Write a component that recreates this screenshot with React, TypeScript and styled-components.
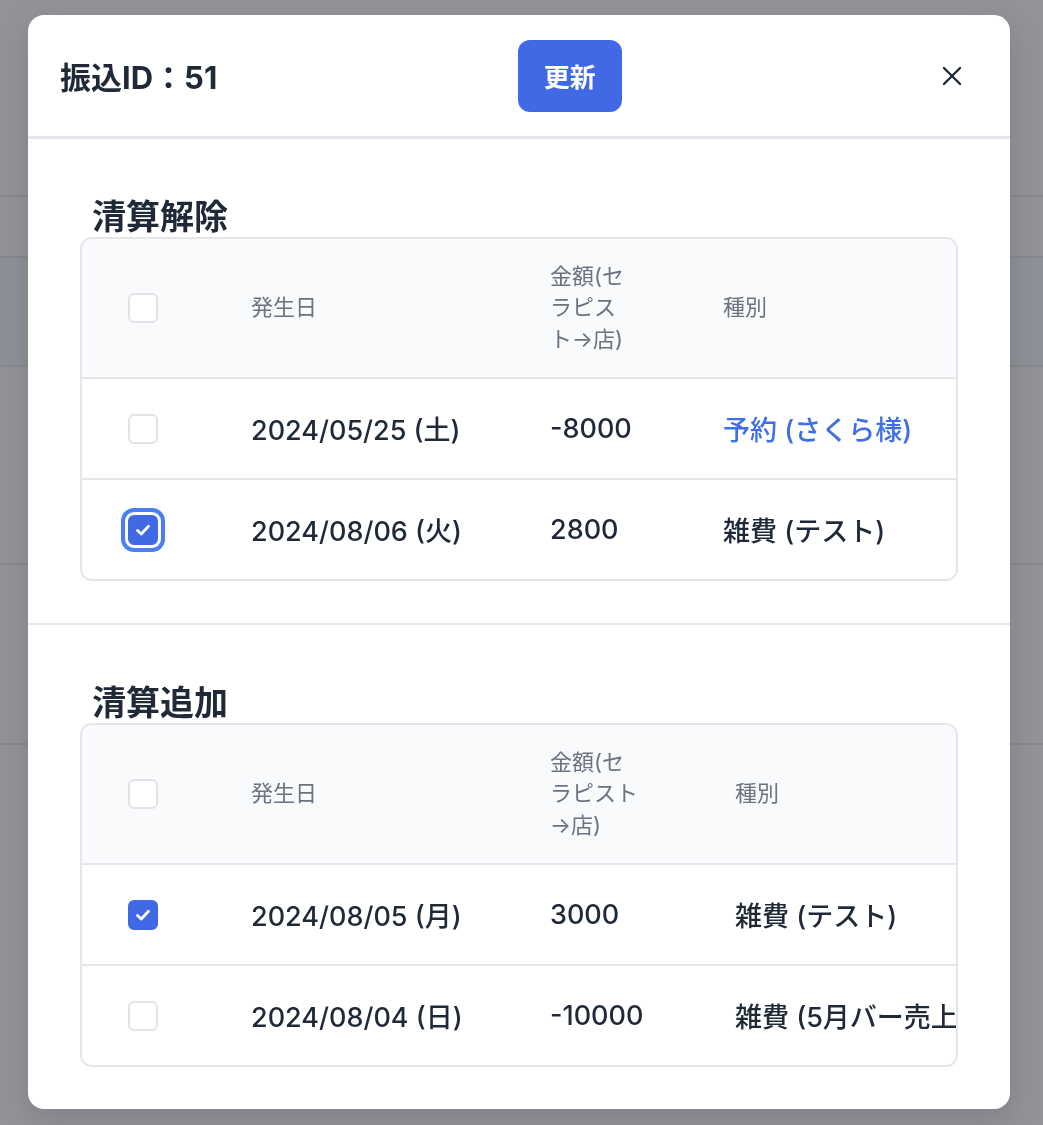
import React from 'react';
import styled, { createGlobalStyle } from 'styled-components';

const GlobalStyle = createGlobalStyle`
  html, body {
    margin: 0;
    padding: 0;
  }
  body {
    background: #919399;
    font-family: Inter, "Noto Sans CJK JP", sans-serif;
    color: #1f2937;
    -webkit-font-smoothing: antialiased;
  }
  * {
    box-sizing: border-box;
  }
`;

// dimmed page behind the modal
const Page = styled.div`
  height: 1125px;
  overflow: hidden;
  display: flex;
  flex-direction: column;
`;

const PageRow = styled.div<{ $h: number; $shade?: boolean }>`
  flex: 0 0 ${(p) => p.$h}px;
  border-bottom: 2px solid #86888e;
  background: ${(p) => (p.$shade ? '#8e9098' : 'transparent')};
`;

const Overlay = styled.div`
  position: fixed;
  inset: 0;
  padding: 15px 33px 0 28px;
`;

const Modal = styled.div`
  width: 982px;
  background: #fff;
  border-radius: 16px;
  overflow: hidden;
  box-shadow: 0 10px 30px rgba(0, 0, 0, 0.12);
`;

const Header = styled.header`
  height: 124px;
  display: flex;
  align-items: center;
  justify-content: space-between;
  padding: 0 28px 0 32px;
  border-bottom: 3px solid #e5e6eb;
`;

const Title = styled.h2`
  margin: 0;
  font-size: 31px;
  font-weight: 700;
  color: #1f2937;
`;

const UpdateButton = styled.button`
  width: 104px;
  height: 72px;
  border: none;
  border-radius: 12px;
  background: #4169e6;
  color: #fff;
  font-family: inherit;
  font-size: 26px;
  font-weight: 700;
  cursor: pointer;
`;

const CloseButton = styled.button`
  width: 60px;
  height: 60px;
  border: none;
  background: transparent;
  display: flex;
  align-items: center;
  justify-content: center;
  padding: 0;
  cursor: pointer;
`;

const Section = styled.section`
  padding: 58px 52px 42px;

  & + & {
    border-top: 2px solid #e5e6eb;
  }
`;

const SectionTitle = styled.h3`
  margin: 0 0 0 12px;
  font-size: 34px;
  line-height: 40px;
  font-weight: 700;
  color: #1f2937;
`;

const Card = styled.div`
  border: 2px solid #e5e6eb;
  border-radius: 12px;
  overflow: hidden;
`;

const Row = styled.div<{ $cols: string; $head?: boolean }>`
  display: grid;
  grid-template-columns: ${(p) => p.$cols};
  align-items: center;
  min-height: ${(p) => (p.$head ? 140 : 101)}px;
  background: ${(p) => (p.$head ? '#f9fafb' : '#fff')};
  border-bottom: 2px solid #e5e6eb;

  &:last-child {
    min-height: 99px;
    border-bottom: none;
  }
`;

const CheckCell = styled.div`
  padding-left: 46px;
  display: flex;
  align-items: center;
`;

const HeadCell = styled.div<{ $wrap?: number }>`
  padding-left: 24px;
  font-size: 22px;
  line-height: 31.5px;
  color: #6b7280;

  span {
    display: block;
    max-width: ${(p) => (p.$wrap ? `${p.$wrap}px` : 'none')};
  }
`;

const Cell = styled.div`
  padding-left: 24px;
  font-size: 27px;
  font-weight: 500;
  white-space: nowrap;
  color: #1f2937;
`;

const Link = styled.a`
  color: #3f6fe6;
  text-decoration: none;
`;

const Box = styled.span<{ $checked?: boolean; $focused?: boolean }>`
  width: 30px;
  height: 30px;
  border-radius: 6px;
  border: 2px solid ${(p) => (p.$checked ? '#4169e6' : '#e2e3e8')};
  background: ${(p) => (p.$checked ? '#4169e6' : '#fff')};
  display: inline-flex;
  align-items: center;
  justify-content: center;
  box-shadow: ${(p) => (p.$focused ? '0 0 0 3px #fff, 0 0 0 7px #4a7ff2' : 'none')};
`;

function Checkbox({ checked, focused }: { checked?: boolean; focused?: boolean }) {
  return (
    <Box $checked={checked} $focused={focused}>
      {checked && (
        <svg width="20" height="20" viewBox="0 0 16 16" fill="none">
          <polyline
            points="3.6 8.4 6.6 11.2 12.4 5"
            stroke="#fff"
            strokeWidth="2.2"
            strokeLinecap="round"
            strokeLinejoin="round"
          />
        </svg>
      )}
    </Box>
  );
}

type Entry = {
  date: string;
  amount: string;
  kind: string;
  link?: boolean;
  checked?: boolean;
  focused?: boolean;
};

type TableProps = {
  title: string;
  cols: string;
  amountWrap: number;
  rows: Entry[];
};

function SettleTable({ title, cols, amountWrap, rows }: TableProps) {
  return (
    <Section>
      <SectionTitle>{title}</SectionTitle>
      <Card>
        <Row $cols={cols} $head>
          <CheckCell>
            <Checkbox />
          </CheckCell>
          <HeadCell>発生日</HeadCell>
          <HeadCell $wrap={amountWrap}>
            <span>金額(セラピスト→店)</span>
          </HeadCell>
          <HeadCell>種別</HeadCell>
        </Row>
        {rows.map((r) => (
          <Row $cols={cols} key={r.date}>
            <CheckCell>
              <Checkbox checked={r.checked} focused={r.focused} />
            </CheckCell>
            <Cell>{r.date}</Cell>
            <Cell>{r.amount}</Cell>
            <Cell>{r.link ? <Link href="#">{r.kind}</Link> : r.kind}</Cell>
          </Row>
        ))}
      </Card>
    </Section>
  );
}

const removeRows: Entry[] = [
  { date: '2024/05/25 (土)', amount: '-8000', kind: '予約 (さくら様)', link: true },
  { date: '2024/08/06 (火)', amount: '2800', kind: '雑費 (テスト)', checked: true, focused: true },
];

const addRows: Entry[] = [
  { date: '2024/08/05 (月)', amount: '3000', kind: '雑費 (テスト)', checked: true },
  { date: '2024/08/04 (日)', amount: '-10000', kind: '雑費 (5月バー売上)' },
];

export default function App() {
  return (
    <>
      <GlobalStyle />
      <Page>
        <PageRow $h={197} />
        <PageRow $h={61} />
        <PageRow $h={109} $shade />
        <PageRow $h={198} />
        <PageRow $h={180} />
      </Page>
      <Overlay>
        <Modal>
          <Header>
            <Title>振込ID：51</Title>
            <UpdateButton>更新</UpdateButton>
            <CloseButton aria-label="閉じる">
              <svg width="20" height="20" viewBox="0 0 20 20" fill="none">
                <path d="M2 2L18 18M18 2L2 18" stroke="#1f2937" strokeWidth="2.4" strokeLinecap="round" />
              </svg>
            </CloseButton>
          </Header>
          <SettleTable title="清算解除" cols="145px 299px 173px 1fr" amountWrap={78} rows={removeRows} />
          <SettleTable title="清算追加" cols="145px 299px 185px 1fr" amountWrap={92} rows={addRows} />
        </Modal>
      </Overlay>
    </>
  );
}
